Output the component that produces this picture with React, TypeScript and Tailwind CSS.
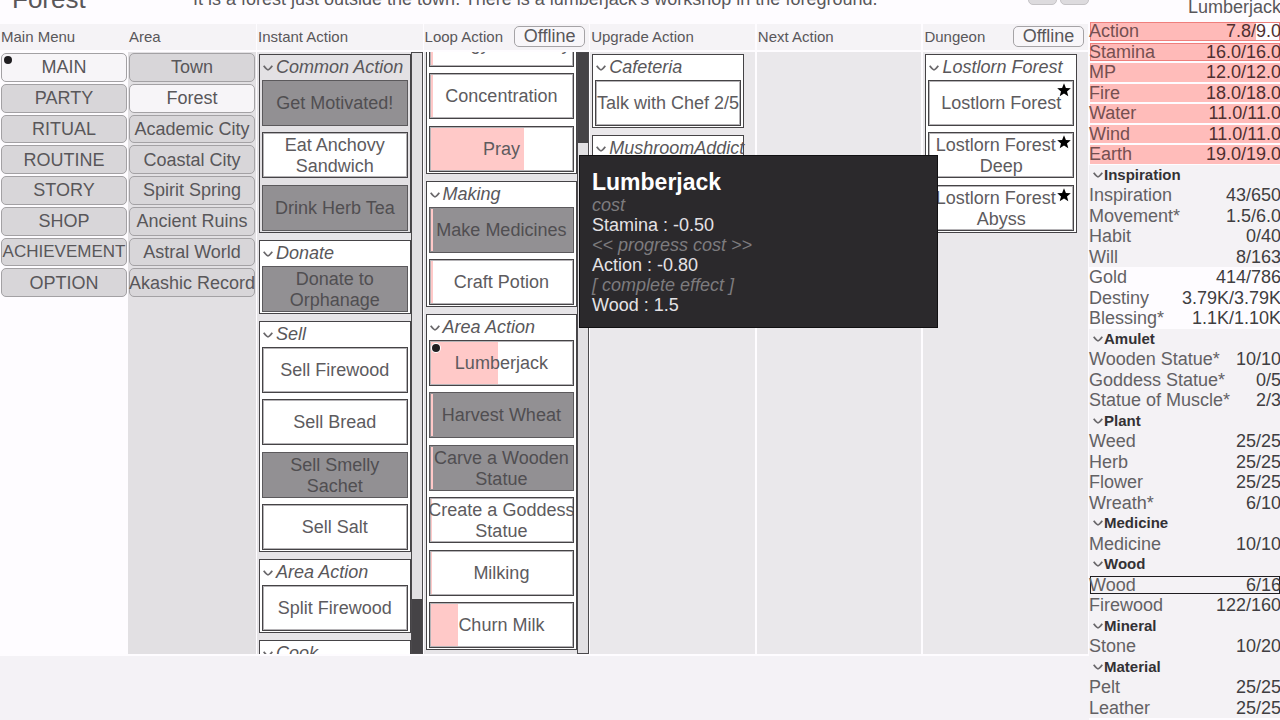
import React from 'react';

interface Action {
    name: string;
    disabled?: boolean;
    progress?: number;
    active?: boolean;
    starred?: boolean;
    wraps?: boolean;
}

interface ActionGroup {
    title: string;
    dimmed?: boolean;
    actions: Action[];
}

interface Stat {
    name: string;
    value?: string;
    kind?: 'vital' | 'vitalUsed' | 'heading' | 'plain' | 'currency' | 'changed';
    fill?: number;
}

const menuItems = ['MAIN', 'PARTY', 'RITUAL', 'ROUTINE', 'STORY', 'SHOP', 'ACHIEVEMENT', 'OPTION'];

const areas = [
    'Town',
    'Forest',
    'Academic City',
    'Coastal City',
    'Spirit Spring',
    'Ancient Ruins',
    'Astral World',
    'Akashic Record'
];

const instantGroups: ActionGroup[] = [
    {
        title: 'Common Action',
        dimmed: true,
        actions: [
            { name: 'Get Motivated!', disabled: true },
            { name: 'Eat Anchovy Sandwich' },
            { name: 'Drink Herb Tea', disabled: true }
        ]
    },
    { title: 'Donate', actions: [{ name: 'Donate to Orphanage', disabled: true }] },
    {
        title: 'Sell',
        actions: [
            { name: 'Sell Firewood' },
            { name: 'Sell Bread' },
            { name: 'Sell Smelly Sachet', disabled: true },
            { name: 'Sell Salt' }
        ]
    },
    { title: 'Area Action', actions: [{ name: 'Split Firewood' }] },
    { title: 'Cook', actions: [] }
];

const loopGroups: ActionGroup[] = [
    {
        title: 'Common Action',
        actions: [
            { name: 'Energy Recovery', progress: 2 },
            { name: 'Concentration', progress: 2 },
            { name: 'Pray', progress: 65 }
        ]
    },
    {
        title: 'Making',
        actions: [
            { name: 'Make Medicines', disabled: true, progress: 2 },
            { name: 'Craft Potion', progress: 2 }
        ]
    },
    {
        title: 'Area Action',
        actions: [
            { name: 'Lumberjack', progress: 47, active: true },
            { name: 'Harvest Wheat', disabled: true, progress: 2 },
            { name: 'Carve a Wooden Statue', disabled: true, progress: 2 },
            { name: 'Create a Goddess Statue', progress: 1 },
            { name: 'Milking', progress: 1 },
            { name: 'Churn Milk', progress: 19 }
        ]
    }
];

const upgradeGroups: ActionGroup[] = [
    { title: 'Cafeteria', actions: [{ name: 'Talk with Chef 2/5' }] },
    { title: 'MushroomAddict', actions: [] }
];

const dungeonGroups: ActionGroup[] = [
    {
        title: 'Lostlorn Forest',
        actions: [
            { name: 'Lostlorn Forest', starred: true },
            { name: 'Lostlorn Forest Deep', starred: true, wraps: true },
            { name: 'Lostlorn Forest Abyss', starred: true, wraps: true }
        ]
    }
];

const stats: Stat[] = [
    { name: 'Action', value: '7.8/9.0', kind: 'vitalUsed', fill: 87 },
    { name: 'Stamina', value: '16.0/16.0', kind: 'vitalUsed', fill: 100 },
    { name: 'MP', value: '12.0/12.0', kind: 'vital', fill: 100 },
    { name: 'Fire', value: '18.0/18.0', kind: 'vital', fill: 100 },
    { name: 'Water', value: '11.0/11.0', kind: 'vital', fill: 100 },
    { name: 'Wind', value: '11.0/11.0', kind: 'vital', fill: 100 },
    { name: 'Earth', value: '19.0/19.0', kind: 'vital', fill: 100 },
    { name: 'Inspiration', kind: 'heading' },
    { name: 'Inspiration', value: '43/650' },
    { name: 'Movement*', value: '1.5/6.0' },
    { name: 'Habit', value: '0/40' },
    { name: 'Will', value: '8/163' },
    { name: 'Gold', value: '414/786', kind: 'currency' },
    { name: 'Destiny', value: '3.79K/3.79K', kind: 'currency' },
    { name: 'Blessing*', value: '1.1K/1.10K', kind: 'currency' },
    { name: 'Amulet', kind: 'heading' },
    { name: 'Wooden Statue*', value: '10/10' },
    { name: 'Goddess Statue*', value: '0/5' },
    { name: 'Statue of Muscle*', value: '2/3' },
    { name: 'Plant', kind: 'heading' },
    { name: 'Weed', value: '25/25' },
    { name: 'Herb', value: '25/25' },
    { name: 'Flower', value: '25/25' },
    { name: 'Wreath*', value: '6/10' },
    { name: 'Medicine', kind: 'heading' },
    { name: 'Medicine', value: '10/10' },
    { name: 'Wood', kind: 'heading' },
    { name: 'Wood', value: '6/16', kind: 'changed' },
    { name: 'Firewood', value: '122/160' },
    { name: 'Mineral', kind: 'heading' },
    { name: 'Stone', value: '10/20' },
    { name: 'Material', kind: 'heading' },
    { name: 'Pelt', value: '25/25' },
    { name: 'Leather', value: '25/25' }
];

const Chevron: React.FC = () => (
    <svg viewBox="0 0 10 6" className="w-[10px] h-[6px] shrink-0" fill="none" stroke="#69676a" strokeWidth="1.7">
        <path d="M0.7 0.8 Q3.8 4.8 5 4.8 Q6.2 4.8 9.3 0.8" />
    </svg>
);

const Star: React.FC = () => (
    <svg viewBox="0 0 14 14" className="absolute right-[2px] top-[2px] w-[14px] h-[14px]" fill="#000">
        <path d="M7 0.3 L8.9 5 L13.8 5.3 L10 8.4 L11.3 13.3 L7 10.6 L2.7 13.3 L4 8.4 L0.2 5.3 L5.1 5 Z" />
    </svg>
);

const ActionButton: React.FC<{ action: Action }> = ({ action }) => (
    <button
        disabled={action.disabled}
        className={`relative block w-full h-[46px] pt-[1px] border overflow-hidden text-[18px] leading-[21px] ${
            action.disabled
                ? 'bg-[#929093] border-[#5b595c] text-[#504e51]'
                : 'bg-white border-[#454346] text-[#5d5b5e] shadow-[inset_0_0_0_1px_#b5b3b6]'
        }`}
    >
        {action.progress !== undefined && (
            <span
                className="absolute inset-y-[1px] left-[1px] bg-[#ffc9c8]"
                style={{ width: `${action.progress}%` }}
            />
        )}
        <span className="relative -mx-[2px] block">
            {/* keeps the first line clear of the star */}
            {action.wraps && <span className="float-right w-[11px] h-[20px]" />}
            {action.name}
        </span>
        {action.active && (
            <span className="absolute left-[2px] top-[3px] w-[8px] h-[8px] rounded-full bg-[#1f1d20] ring-1 ring-white" />
        )}
        {action.starred && <Star />}
    </button>
);

const GroupList: React.FC<{ groups: ActionGroup[] }> = ({ groups }) => (
    <div className="flex flex-col gap-[7px] flex-1 min-w-0">
        {groups.map((group) => (
            <section
                key={group.title}
                className={`border border-[#454346] px-[2px] ${group.dimmed ? 'bg-[#e3e1e4]' : 'bg-white'}`}
            >
                <h3 className="flex items-center gap-[3px] h-[25px] pl-[1px] text-[18px] leading-[25px] italic whitespace-nowrap text-[#59575a]">
                    <Chevron />
                    {group.title}
                </h3>
                <ul className="pb-[1px]">
                    {group.actions.map((action) => (
                        <li key={action.name} className="even:mt-[6px] odd:not-first:mt-[7px]">
                            <ActionButton action={action} />
                        </li>
                    ))}
                </ul>
            </section>
        ))}
    </div>
);

const ScrollTrack: React.FC<{ size: number; atEnd?: boolean }> = ({ size, atEnd }) => (
    <div className={`flex flex-col w-[12px] shrink-0 bg-[#e2e0e3] border border-[#4b494c] ${atEnd ? 'justify-end' : ''}`}>
        <div className="bg-[#454346]" style={{ height: `${size}%` }} />
    </div>
);

const ColumnHeader: React.FC<{ title: string; offline?: boolean }> = ({ title, offline }) => (
    <div className="flex items-center justify-between h-[26px] pr-[4px] pb-[1px] pl-[1px] bg-[#f5f3f6] text-[15px] leading-[20px] text-[#59575a]">
        <h2>{title}</h2>
        {offline && (
            <button className="w-[71px] h-[21px] rounded-[5px] border border-[#a5a3a6] bg-[#f8f6f9] text-[18px] leading-[19px]">
                Offline
            </button>
        )}
    </div>
);

const NavList: React.FC<{ items: string[]; selected: string; marked?: boolean }> = ({ items, selected, marked }) => (
    <nav className="grid auto-rows-fr gap-[2px] h-[244px] mt-[1px] px-[1px]">
        {items.map((item) => (
            <button
                key={item}
                className={`relative rounded-[5px] border border-[#a3a1a4] leading-[20px] whitespace-nowrap text-[#59575a] ${
                    item.length === 11 ? 'text-[17px]' : 'text-[18px]'
                } ${item === selected ? 'bg-[#f7f5f8]' : 'bg-[#d8d6d9]'}`}
            >
                <span className="-mx-2">{item}</span>
                {marked && item === selected && (
                    <span className="absolute left-[2px] top-[2px] w-[8px] h-[8px] rounded-full bg-[#1f1d20]" />
                )}
            </button>
        ))}
    </nav>
);

const StatRow: React.FC<{ stat: Stat }> = ({ stat }) => {
    if (stat.kind === 'heading') {
        return (
            <h3 className="flex flex-1 items-center pl-[4px] bg-[#f4f2f5] text-[15px] leading-[18px] font-bold text-[#333134]">
                <Chevron />
                <span className="pl-[1px]">{stat.name}</span>
            </h3>
        );
    }

    const isVital = stat.kind === 'vital' || stat.kind === 'vitalUsed';
    const background = isVital || stat.kind === 'currency' ? 'bg-[#fefcff]' : 'bg-[#f4f2f5]';

    return (
        <div className={`relative flex flex-1 items-center justify-between text-[18px] leading-[20px] ${background}`}>
            {isVital && (
                <div
                    className={`absolute left-[1px] inset-y-[1px] ${
                        stat.kind === 'vitalUsed' ? 'bg-[#ffbab8]' : 'bg-[#ffbcba]'
                    }`}
                    style={{ width: `${stat.fill}%` }}
                />
            )}
            {stat.kind === 'vitalUsed' && (
                <div className="absolute left-[1px] right-0 inset-y-[1px] border border-[#ef7f7c]" />
            )}
            {stat.kind === 'changed' && (
                <div className="absolute left-[1px] right-0 inset-y-[1px] border border-[#1f1d20]" />
            )}
            <span className={`relative ${isVital ? 'text-[#754f50]' : 'text-[#636164]'}`}>{stat.name}</span>
            <span className={`relative -mr-[1px] ${isVital ? 'text-[#4e2f30]' : 'text-[#403e41]'}`}>{stat.value}</span>
        </div>
    );
};

const Tooltip: React.FC = () => (
    <div
        role="tooltip"
        className="absolute left-[579px] top-[155px] w-[359px] h-[173px] pl-[12px] pt-[13px] bg-[#2b292c] border border-[#111012] text-[18px] leading-[20px] text-[#e4e2e5]"
    >
        <h4 className="h-[26px] text-[23px] leading-[26px] font-bold text-white">Lumberjack</h4>
        <p className="italic text-[#7d7b7e]">cost</p>
        <p>Stamina : -0.50</p>
        <p className="italic text-[#7d7b7e]">&lt;&lt; progress cost &gt;&gt;</p>
        <p>Action : -0.80</p>
        <p className="italic text-[#7d7b7e]">[ complete effect ]</p>
        <p>Wood : 1.5</p>
    </div>
);

const App: React.FC = () => {
    return (
        <div className="relative flex h-screen overflow-hidden bg-[#f4f2f6] font-['Liberation_Sans',Arial,sans-serif]">
            <main className="flex flex-col flex-1 min-w-0">
                {/* Location bar */}
                <header className="relative flex h-[24px] bg-[#fefcff] text-[#59575a]">
                    <h1 className="w-[193px] -mt-[16px] pl-[12px] text-[26px] leading-[30px]">Forest</h1>
                    <p className="-mt-[11px] text-[18px] leading-[20px] whitespace-nowrap">
                        It is a forest just outside the town. There is a lumberjack's workshop in the foreground.
                    </p>
                    <div className="absolute right-0 -top-[17px] flex gap-[3px]">
                        <button aria-label="Previous area" className="w-[29px] h-[22px] rounded-[5px] border border-[#c5c3c6] bg-[#dddbde]" />
                        <button aria-label="Next area" className="w-[29px] h-[22px] rounded-[5px] border border-[#c5c3c6] bg-[#dddbde]" />
                    </div>
                </header>

                <div className="grid grid-cols-[128px_128px_repeat(5,minmax(0,1fr))] h-[632px] bg-[#fefcff]">
                    <div>
                        <ColumnHeader title="Main Menu" />
                        <div className="pt-[2px]">
                            <NavList items={menuItems} selected="MAIN" marked />
                        </div>
                    </div>

                    <div className="flex flex-col">
                        <ColumnHeader title="Area" />
                        <div className="flex-1 mt-[2px] mb-[2px] bg-[#e2e0e3]">
                            <NavList items={areas} selected="Forest" />
                        </div>
                    </div>

                    <div className="flex flex-col min-h-0 pl-[1px]">
                        <ColumnHeader title="Instant Action" />
                        <div className="flex flex-1 min-h-0 my-[2px] pl-[2px] overflow-hidden bg-[#e6e4e7]">
                            <div className="flex flex-1 min-w-0 h-full pt-[2px] overflow-hidden">
                                <GroupList groups={instantGroups} />
                            </div>
                            <ScrollTrack size={9} atEnd />
                        </div>
                    </div>

                    <div className="flex flex-col min-h-0 pl-[1px]">
                        <ColumnHeader title="Loop Action" offline />
                        <div className="flex flex-1 min-h-0 my-[2px] pl-[2px] overflow-hidden bg-[#e6e4e7]">
                            <div className="flex-1 min-w-0 h-full overflow-hidden">
                                <div className="flex -mt-[57px]">
                                    <GroupList groups={loopGroups} />
                                </div>
                            </div>
                            <ScrollTrack size={15} />
                        </div>
                    </div>

                    <div className="flex flex-col min-h-0 px-[1px]">
                        <ColumnHeader title="Upgrade Action" />
                        <div className="flex flex-1 min-h-0 my-[2px] pl-[2px] pr-[11px] pt-[2px] items-start bg-[#eae8eb]">
                            <GroupList groups={upgradeGroups} />
                        </div>
                    </div>

                    <div className="flex flex-col min-h-0 px-[1px]">
                        <ColumnHeader title="Next Action" />
                        <div className="flex-1 my-[2px] bg-[#eae8eb]" />
                    </div>

                    <div className="flex flex-col min-h-0 px-[1px]">
                        <ColumnHeader title="Dungeon" offline />
                        <div className="flex flex-1 min-h-0 my-[2px] pl-[2px] pr-[11px] pt-[2px] items-start bg-[#eae8eb]">
                            <GroupList groups={dungeonGroups} />
                        </div>
                    </div>
                </div>
            </main>

            {/* Resources */}
            <aside className="flex flex-col w-[191px] shrink-0 pb-[2px] bg-[#fefcff]">
                <p className="h-[21px] -mr-[1px] text-right text-[18px] leading-[14px] text-[#59575a]">Lumberjack</p>
                <div className="flex flex-col flex-1">
                    {stats.map((stat, index) => (
                        <StatRow key={index} stat={stat} />
                    ))}
                </div>
            </aside>

            <Tooltip />
        </div>
    );
};

export default App;
